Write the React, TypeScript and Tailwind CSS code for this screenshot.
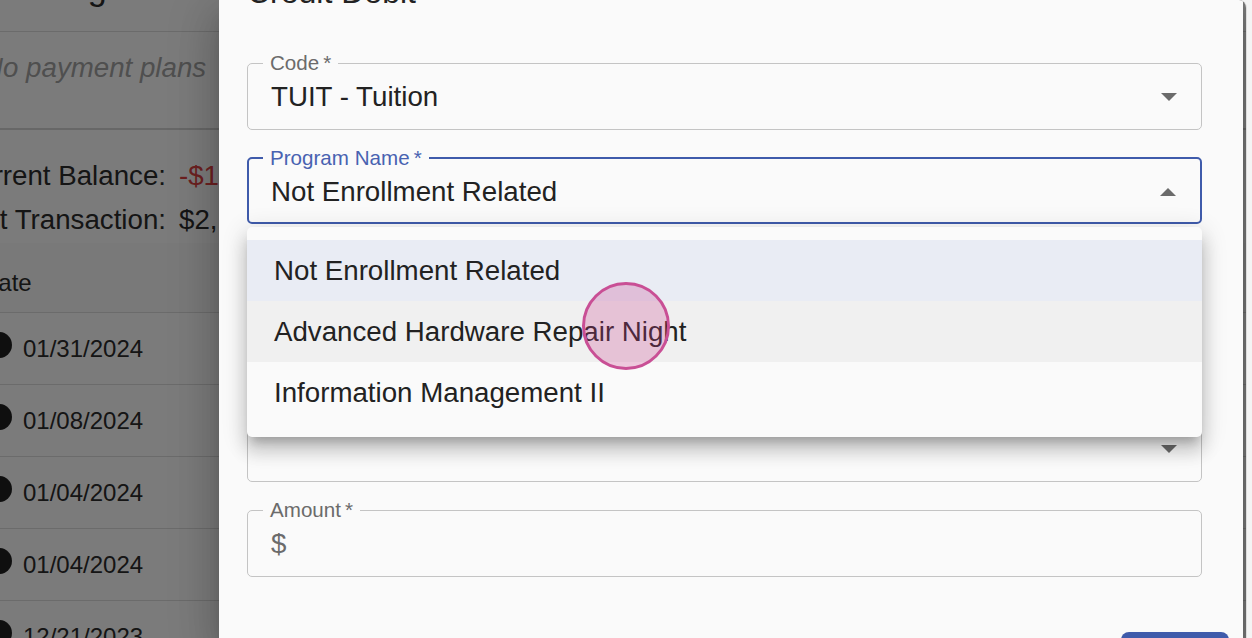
import { ReactNode } from "react";
import clsx from "clsx";

const rows = ["01/31/2024", "01/08/2024", "01/04/2024", "01/04/2024", "12/21/2023"];
const programs = ["Not Enrollment Related", "Advanced Hardware Repair Night", "Information Management II"];

function Caret({ up }: { up?: boolean }) {
  return (
    <svg width="16" height="8" viewBox="0 0 16 8" className="shrink-0 fill-[#6b6b6b]">
      {up ? <path d="M0 8L8 0L16 8Z" /> : <path d="M0 0L8 8L16 0Z" />}
    </svg>
  );
}

function Field({
  label,
  focused,
  children,
}: {
  label: string;
  focused?: boolean;
  children: ReactNode;
}) {
  return (
    <fieldset
      className={clsx(
        "rounded-[5px] pr-[24px]",
        focused ? "border-2 border-[#3f5bab] pl-[14px]" : "border border-[#c4c4c4] pl-[15px]"
      )}
    >
      <legend
        className={clsx(
          "px-[7px] text-[20.6px] leading-[24px]",
          focused ? "text-[#4862b1]" : "text-[#6b6b6b]"
        )}
      >
        {label}
        {"\u2009*"}
      </legend>
      <div
        className={clsx(
          "flex h-[32px] items-center justify-between pl-[8px] box-content",
          focused ? "pt-[6px] pb-[14px]" : "pt-[6px] pb-[16px]"
        )}
      >
        {children}
      </div>
    </fieldset>
  );
}

function AccountPage() {
  return (
    <div className="-ml-[44px] -mt-[40px] w-[1291px] bg-[#f7f7f7] text-[#2a2a2a]">
      {/* page heading */}
      <div className="h-[72px] border-b border-[#d6d6d6] pl-[60px] pt-[9px] text-[34px] leading-[39px]">
        Billing
      </div>

      {/* payment plans */}
      <div className="flex h-[98px] justify-between border-b-2 border-[#cfcfcf] pl-[27px] pr-[40px] pt-[20px] text-[27.7px] leading-[32px]">
        <span className="italic text-[#9e9e9e]">No payment plans</span>
        <span className="text-[#555]">Add plans</span>
      </div>

      {/* balance summary */}
      <div className="-ml-[50px] grid h-[113px] grid-cols-[260px_1fr] gap-x-[13px] whitespace-nowrap pt-[26px] text-[27.7px] leading-[40px]">
        <span className="text-right">Current Balance:</span>
        <span className="text-[#d84040]">-$1,240.00</span>
        <span className="text-right">Last Transaction:</span>
        <span>$2,150.00</span>
      </div>

      {/* transactions */}
      <div className="flex h-[70px] items-center border-b border-[#d6d6d6] bg-[#f2f2f2] pl-[25px] pt-[10px] text-[24px]">
        Date
      </div>
      {rows.map((d, i) => (
        <div key={i} className="flex h-[72px] items-center border-b border-[#d6d6d6] pl-[30px] text-[24px]">
          <span className="-mt-[7px] h-[26px] w-[26px] rounded-full bg-[#1f1f1f]" />
          <span className="ml-[11px]">{d}</span>
        </div>
      ))}
    </div>
  );
}

function CreditDebitDialog() {
  return (
    <div className="absolute bottom-0 left-[219px] top-0 z-10 flex w-[1024px] flex-col bg-[#fafafa] pl-[28px] pr-[41px] text-[#222] shadow-[0_11px_15px_-7px_rgba(0,0,0,0.2),0_24px_38px_3px_rgba(0,0,0,0.14),0_9px_46px_8px_rgba(0,0,0,0.12)]">
      <h2 className="-mt-[27px] mb-[40px] h-[38px] text-[32px] leading-[38px]">Credit Debit</h2>

      <div className="flex flex-col gap-[16px] text-[27.7px] leading-[32px]">
        <Field label="Code">
          <span>TUIT - Tuition</span>
          <Caret />
        </Field>

        <div className="relative">
          <Field label="Program Name" focused>
            <span>Not Enrollment Related</span>
            <Caret up />
          </Field>

          {/* open select menu */}
          <ul className="absolute left-0 right-0 top-[calc(100%+3px)] z-20 rounded-[5px] bg-[#fafafa] pb-[14px] pt-[13px] shadow-[0_9px_9px_-5px_rgba(0,0,0,0.2),0_14px_17px_2px_rgba(0,0,0,0.14),0_5px_24px_3px_rgba(0,0,0,0.12)]">
            {programs.map((p, i) => (
              <li
                key={p}
                className={clsx(
                  "flex h-[61px] items-center pl-[27px]",
                  i === 0 && "bg-[#e9ecf4]",
                  i === 1 && "bg-[#f0f0f0]"
                )}
              >
                {p}
              </li>
            ))}
          </ul>
        </div>

        <fieldset className="rounded-[5px] border border-[#c4c4c4] pl-[15px]">
          <legend className="px-[7px] text-[20.6px] leading-[24px] text-[#6b6b6b]">Description</legend>
          <div className="h-[122px]" />
        </fieldset>

        <Field label="Term">
          <span />
          <Caret />
        </Field>

        <Field label="Amount">
          <span className="text-[#6b6b6b]">$</span>
        </Field>
      </div>

      <div className="-mr-[27px] mt-[55px] flex justify-end">
        <button className="h-[44px] w-[108px] rounded-[8px] bg-[#3f5bab] text-[20px] font-medium tracking-wide text-white">
          SAVE
        </button>
      </div>
    </div>
  );
}

export default function App() {
  return (
    <div className="flex h-[638px] w-[1252px] bg-[#f4f4f4] font-['Liberation_Sans',Arial,sans-serif]">
      <main className="relative h-[638px] w-[1247px] shrink-0 overflow-hidden rounded-tr-[8px] border-r border-[#dcdcdc]">
        <AccountPage />
        <div className="absolute inset-0 bg-black/50" />
        <CreditDebitDialog />

        {/* click marker */}
        <div className="absolute left-[582px] top-[282px] z-30 h-[88px] w-[88px] rounded-full border-[3px] border-[#c94f95] bg-[rgba(200,60,140,0.26)]" />
      </main>
    </div>
  );
}
